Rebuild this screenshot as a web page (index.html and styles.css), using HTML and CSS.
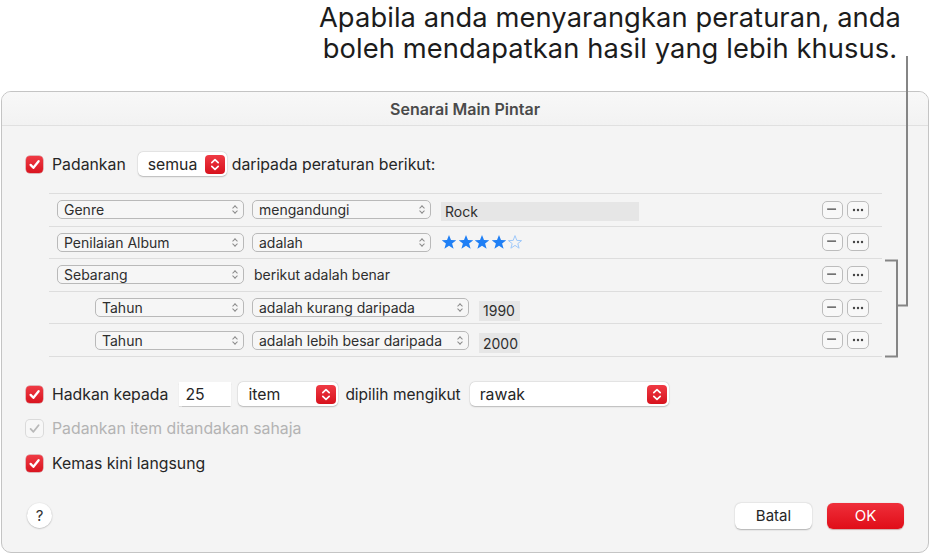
FILE: index.html
```html
<!DOCTYPE html>
<html lang="ms">
<head>
<meta charset="utf-8">
<title>Senarai Main Pintar</title>
<link rel="stylesheet" href="styles.css">
</head>
<body>
<div class="page">
  <div class="callout">Apabila anda menyarangkan peraturan, anda<br>boleh mendapatkan hasil yang lebih khusus.</div>

  <div class="dialog">
    <div class="titlebar">Senarai Main Pintar</div>
    <div class="content">
      <div class="line match-line">
        <span class="cb on"><svg viewBox="0 0 17 17" width="17" height="17"><path d="M4.6 8.9 L7.4 11.8 L12.6 5.2" /></svg></span>
        <span class="label lbl-padankan">Padankan</span>
        <span class="pop pop-semua">semua<span class="stepper"><svg viewBox="0 0 20 19" width="20" height="19"><path d="M6.8 7.6 L10 4.6 L13.2 7.6 M6.8 11.4 L10 14.4 L13.2 11.4"/></svg></span></span>
        <span class="label lbl-daripada">daripada peraturan berikut:</span>
      </div>

      <div class="rules">
        <div class="rule">
          <span class="sel sel-a">Genre<i class="chev"></i></span>
          <span class="sel sel-b">mengandungi<i class="chev"></i></span>
          <span class="field field-rock">Rock</span>
          <span class="acts"><span class="mini minus"><svg viewBox="0 0 21 18" width="19" height="16"><path d="M4.5 8 H14.5"/></svg></span><span class="mini more"><svg viewBox="0 0 20 16" width="20" height="16"><circle cx="6" cy="8" r="1.2"/><circle cx="10" cy="8" r="1.2"/><circle cx="14" cy="8" r="1.2"/></svg></span></span>
        </div>
        <div class="rule">
          <span class="sel sel-a">Penilaian Album<i class="chev"></i></span>
          <span class="sel sel-b">adalah<i class="chev"></i></span>
          <span class="stars">
            <svg viewBox="0 0 16 16" width="16" height="16" class="star full"><polygon points="8,1 10,6 15.3,6.2 11.1,9.5 12.6,14.7 8,11.7 3.4,14.7 4.9,9.5 0.7,6.2 6,6"/></svg>
            <svg viewBox="0 0 16 16" width="16" height="16" class="star full"><polygon points="8,1 10,6 15.3,6.2 11.1,9.5 12.6,14.7 8,11.7 3.4,14.7 4.9,9.5 0.7,6.2 6,6"/></svg>
            <svg viewBox="0 0 16 16" width="16" height="16" class="star full"><polygon points="8,1 10,6 15.3,6.2 11.1,9.5 12.6,14.7 8,11.7 3.4,14.7 4.9,9.5 0.7,6.2 6,6"/></svg>
            <svg viewBox="0 0 16 16" width="16" height="16" class="star full"><polygon points="8,1 10,6 15.3,6.2 11.1,9.5 12.6,14.7 8,11.7 3.4,14.7 4.9,9.5 0.7,6.2 6,6"/></svg>
            <svg viewBox="0 0 16 16" width="16" height="16" class="star empty"><polygon points="8,1.6 9.8,6.4 14.6,6.6 10.8,9.6 12.1,14.2 8,11.4 3.9,14.2 5.2,9.6 1.4,6.6 6.2,6.4"/></svg>
          </span>
          <span class="acts"><span class="mini minus"><svg viewBox="0 0 21 18" width="19" height="16"><path d="M4.5 8 H14.5"/></svg></span><span class="mini more"><svg viewBox="0 0 20 16" width="20" height="16"><circle cx="6" cy="8" r="1.2"/><circle cx="10" cy="8" r="1.2"/><circle cx="14" cy="8" r="1.2"/></svg></span></span>
        </div>
        <div class="rule">
          <span class="sel sel-a">Sebarang<i class="chev"></i></span>
          <span class="rule-text">berikut adalah benar</span>
          <span class="acts"><span class="mini minus"><svg viewBox="0 0 21 18" width="19" height="16"><path d="M4.5 8 H14.5"/></svg></span><span class="mini more"><svg viewBox="0 0 20 16" width="20" height="16"><circle cx="6" cy="8" r="1.2"/><circle cx="10" cy="8" r="1.2"/><circle cx="14" cy="8" r="1.2"/></svg></span></span>
        </div>
        <div class="rule nested">
          <span class="sel sel-a">Tahun<i class="chev"></i></span>
          <span class="sel sel-b">adalah kurang daripada<i class="chev"></i></span>
          <span class="field field-year">1990</span>
          <span class="acts"><span class="mini minus"><svg viewBox="0 0 21 18" width="19" height="16"><path d="M4.5 8 H14.5"/></svg></span><span class="mini more"><svg viewBox="0 0 20 16" width="20" height="16"><circle cx="6" cy="8" r="1.2"/><circle cx="10" cy="8" r="1.2"/><circle cx="14" cy="8" r="1.2"/></svg></span></span>
        </div>
        <div class="rule nested">
          <span class="sel sel-a">Tahun<i class="chev"></i></span>
          <span class="sel sel-b">adalah lebih besar daripada<i class="chev"></i></span>
          <span class="field field-year">2000</span>
          <span class="acts"><span class="mini minus"><svg viewBox="0 0 21 18" width="19" height="16"><path d="M4.5 8 H14.5"/></svg></span><span class="mini more"><svg viewBox="0 0 20 16" width="20" height="16"><circle cx="6" cy="8" r="1.2"/><circle cx="10" cy="8" r="1.2"/><circle cx="14" cy="8" r="1.2"/></svg></span></span>
        </div>
      </div>

      <div class="line limit-line">
        <span class="cb on"><svg viewBox="0 0 17 17" width="17" height="17"><path d="M4.6 8.9 L7.4 11.8 L12.6 5.2" /></svg></span>
        <span class="label lbl-hadkan">Hadkan kepada</span>
        <span class="input-num">25</span>
        <span class="pop pop-item">item<span class="stepper"><svg viewBox="0 0 20 19" width="20" height="19"><path d="M6.8 7.6 L10 4.6 L13.2 7.6 M6.8 11.4 L10 14.4 L13.2 11.4"/></svg></span></span>
        <span class="label lbl-dipilih">dipilih mengikut</span>
        <span class="pop pop-rawak">rawak<span class="stepper"><svg viewBox="0 0 20 19" width="20" height="19"><path d="M6.8 7.6 L10 4.6 L13.2 7.6 M6.8 11.4 L10 14.4 L13.2 11.4"/></svg></span></span>
      </div>

      <div class="line disabled-line">
        <span class="cb off"><svg viewBox="0 0 17 17" width="17" height="17"><path d="M4.6 8.9 L7.4 11.8 L12.6 5.2" /></svg></span>
        <span class="label muted">Padankan item ditandakan sahaja</span>
      </div>

      <div class="line live-line">
        <span class="cb on"><svg viewBox="0 0 17 17" width="17" height="17"><path d="M4.6 8.9 L7.4 11.8 L12.6 5.2" /></svg></span>
        <span class="label">Kemas kini langsung</span>
      </div>

      <div class="footer">
        <span class="help">?</span>
        <span class="spacer"></span>
        <span class="btn btn-cancel">Batal</span>
        <span class="btn btn-ok">OK</span>
      </div>
    </div>
  </div>

  <svg class="brackets" width="931" height="556" viewBox="0 0 931 556">
    <path d="M907 56 V305.5 H898" />
    <path d="M885 260.5 H897 V356.5 H885" />
  </svg>
</div>
</body>
</html>
```

FILE: styles.css
```css
* { box-sizing: border-box; }

html, body {
  margin: 0;
  padding: 0;
  background: #ffffff;
}

body {
  font-family: Inter, "Liberation Sans", Arial, sans-serif;
  color: #262626;
  width: 931px;
  height: 556px;
  overflow: hidden;
}

.page {
  position: relative;
  width: 931px;
  height: 556px;
}

.callout {
  height: 91px;
  width: 640px;
  margin-left: 290px;
  padding-top: 2px;
  text-align: center;
  font-size: 27.3px;
  line-height: 31px;
  color: #1c1c1c;
  letter-spacing: 0.1px;
}

.dialog {
  margin-left: 1px;
  width: 928px;
  height: 462px;
  border: 1px solid #c4c4c4;
  border-radius: 10px;
  background: #f4f4f4;
  overflow: hidden;
}

.titlebar {
  height: 34px;
  padding-top: 7px;
  text-align: center;
  font-weight: 600;
  font-size: 16px;
  line-height: 20px;
  color: #4a4a4a;
  background: linear-gradient(#f8f8f8, #f2f2f2);
  border-bottom: 1px solid #e0e0e0;
}

.content {
  padding: 26px 0 0 24px;
}

.line {
  display: flex;
  align-items: center;
  height: 24px;
}

.label {
  font-size: 15.8px;
  color: #262626;
  white-space: nowrap;
}

.label.muted { color: #b3b3b3; }

/* checkbox */
.cb {
  width: 17px;
  height: 17px;
  border-radius: 4px;
  flex: none;
  display: flex;
}
.cb svg path {
  fill: none;
  stroke-width: 2.3;
  stroke-linecap: round;
  stroke-linejoin: round;
}
.cb.on {
  background: linear-gradient(#ef3a44, #d9141f);
  box-shadow: 0 0 0 0.5px rgba(160, 0, 10, 0.5);
}
.cb.on svg path { stroke: #ffffff; }
.cb.off {
  background: #f7f7f7;
  box-shadow: 0 0 0 1px #dadada;
}
.cb.off svg path { stroke: #b9b9b9; stroke-width: 1.8; }

.lbl-padankan { margin-left: 9px; }
.lbl-daripada { margin-left: 5px; }
.lbl-hadkan { margin-left: 9px; }
.lbl-dipilih { margin-left: 7px; font-size: 15.5px; }
.disabled-line .label,
.live-line .label { margin-left: 9px; }

/* white popup buttons with red stepper */
.pop {
  display: flex;
  align-items: center;
  height: 24px;
  background: #ffffff;
  border-radius: 5px;
  box-shadow: 0 0.5px 1.5px rgba(0, 0, 0, 0.22), 0 0 0 0.5px rgba(0, 0, 0, 0.06);
  font-size: 15.8px;
  color: #262626;
  padding-left: 10px;
  padding-right: 2px;
  justify-content: space-between;
}
.stepper {
  width: 20px;
  height: 19px;
  border-radius: 4px;
  background: linear-gradient(#ef3a44, #d7121d);
  display: flex;
  flex: none;
}
.stepper svg path {
  fill: none;
  stroke: #ffffff;
  stroke-width: 1.7;
  stroke-linecap: round;
  stroke-linejoin: round;
}
.pop-semua { margin-left: 12px; width: 89px; }
.pop-item { margin-left: 7px; width: 100px; }
.pop-rawak { margin-left: 9px; width: 199px; }

.input-num {
  margin-left: 11px;
  width: 52px;
  height: 24px;
  background: #ffffff;
  box-shadow: 0 0.5px 1px rgba(0, 0, 0, 0.2);
  font-size: 15.8px;
  padding-left: 6px;
  display: flex;
  align-items: center;
}

/* rules list */
.rules {
  margin: 17px 46px 0 23px;
  border-bottom: 1px solid #dddddd;
}
.rule {
  height: 32.6px;
  border-top: 1px solid #dddddd;
  display: flex;
  align-items: center;
  padding-left: 8px;
  padding-right: 13px;
  font-size: 14px;
  color: #2e2e2e;
}
.sel {
  position: relative;
  height: 19px;
  border: 1px solid #b9b9b9;
  border-radius: 5px;
  background: #f6f6f6;
  display: flex;
  align-items: center;
  padding-left: 6px;
  white-space: nowrap;
  flex: none;
}
.sel-a { width: 187px; }
.sel-b { width: 179px; margin-left: 8px; }
.nested .sel-a { width: 149px; margin-left: 38px; }
.nested .sel-b { width: 217px; }

.chev {
  position: absolute;
  right: 5px;
  top: 3px;
  width: 7px;
  height: 11px;
}
.chev::before,
.chev::after {
  content: "";
  position: absolute;
  left: 1.5px;
  width: 3px;
  height: 3px;
  border-left: 1px solid #8a8a8a;
  border-top: 1px solid #8a8a8a;
}
.chev::before { top: 2px; transform: rotate(45deg); }
.chev::after { top: 5px; transform: rotate(-135deg); }

.rule-text {
  margin-left: 10px;
  font-size: 14px;
}

.field {
  height: 19px;
  background: #e6e6e6;
  display: flex;
  align-items: center;
  padding-left: 4px;
  font-size: 14px;
  margin-left: 10px;
}
.field-rock { width: 198px; margin-top: 3px; }
.field-year { width: 41px; margin-top: 6px; height: 20px; }

.stars {
  margin-left: 10px;
  display: flex;
}
.star { display: block; margin-right: 0.5px; }
.star.full polygon { fill: #1f7ff5; }
.star.empty polygon { fill: none; stroke: #9ec8f9; stroke-width: 1; }

.acts {
  margin-left: auto;
  display: flex;
  gap: 4px;
}
.mini {
  height: 18px;
  border: 1px solid #bcbcbc;
  border-radius: 5px;
  background: #f8f8f8;
  display: flex;
  align-items: center;
  justify-content: center;
  flex: none;
}
.mini svg { display: block; }
.minus { width: 21px; }
.minus svg path {
  stroke: #444444;
  stroke-width: 1.4;
}
.more { width: 22px; }
.more svg circle { fill: #444444; }

.limit-line { margin-top: 25.5px; }
.disabled-line { margin-top: 10.5px; }
.live-line { margin-top: 11px; }

.footer {
  margin-top: 27px;
  display: flex;
  align-items: center;
  height: 26px;
  padding-right: 24px;
  padding-left: 1px;
}
.help {
  width: 25px;
  height: 25px;
  border-radius: 50%;
  background: #ffffff;
  box-shadow: 0 0.5px 1.5px rgba(0, 0, 0, 0.3);
  display: flex;
  align-items: center;
  justify-content: center;
  font-size: 15px;
  color: #333333;
}
.spacer { flex: 1; }
.btn {
  width: 77px;
  height: 26px;
  border-radius: 6px;
  display: flex;
  align-items: center;
  justify-content: center;
  font-size: 15px;
}
.btn-cancel {
  background: #ffffff;
  color: #262626;
  box-shadow: 0 0.5px 1.5px rgba(0, 0, 0, 0.28);
}
.btn-ok {
  margin-left: 15px;
  color: #ffffff;
  background: linear-gradient(#ef2f3a, #e00d18);
  box-shadow: 0 0.5px 1px rgba(120, 0, 0, 0.3);
}

.brackets {
  position: absolute;
  left: 0;
  top: 0;
  pointer-events: none;
}
.brackets path {
  fill: none;
  stroke: #858585;
  stroke-width: 2;
}
```
